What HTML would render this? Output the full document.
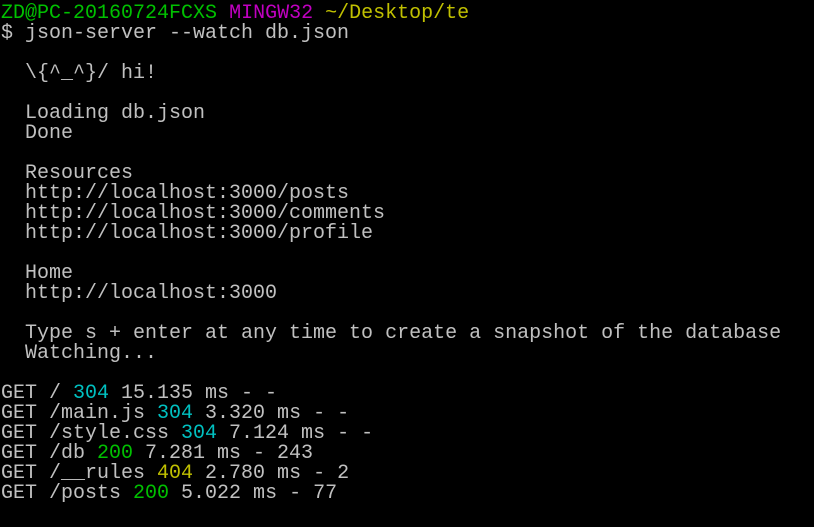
<!DOCTYPE html>
<html><head><meta charset="utf-8"><style>
html,body{margin:0;padding:0;background:#000;width:814px;height:527px;overflow:hidden}
pre{margin:0;padding:4px 0 0 1px;font-family:"Liberation Mono",monospace;font-size:20px;line-height:20px;color:#c0c0c0}
.g{color:#00c000}.m{color:#c000c0}.y{color:#c0c000}.c{color:#00c0c0}
</style></head><body><pre><span class="g">ZD@PC-20160724FCXS</span> <span class="m">MINGW32</span> <span class="y">~/Desktop/te</span>
$ json-server --watch db.json

  \{^_^}/ hi!

  Loading db.json
  Done

  Resources
  http://localhost:3000/posts
  http://localhost:3000/comments
  http://localhost:3000/profile

  Home
  http://localhost:3000

  Type s + enter at any time to create a snapshot of the database
  Watching...

GET / <span class="c">304</span> 15.135 ms - -
GET /main.js <span class="c">304</span> 3.320 ms - -
GET /style.css <span class="c">304</span> 7.124 ms - -
GET /db <span class="g">200</span> 7.281 ms - 243
GET /__rules <span class="y">404</span> 2.780 ms - 2
GET /posts <span class="g">200</span> 5.022 ms - 77
</pre></body></html>
